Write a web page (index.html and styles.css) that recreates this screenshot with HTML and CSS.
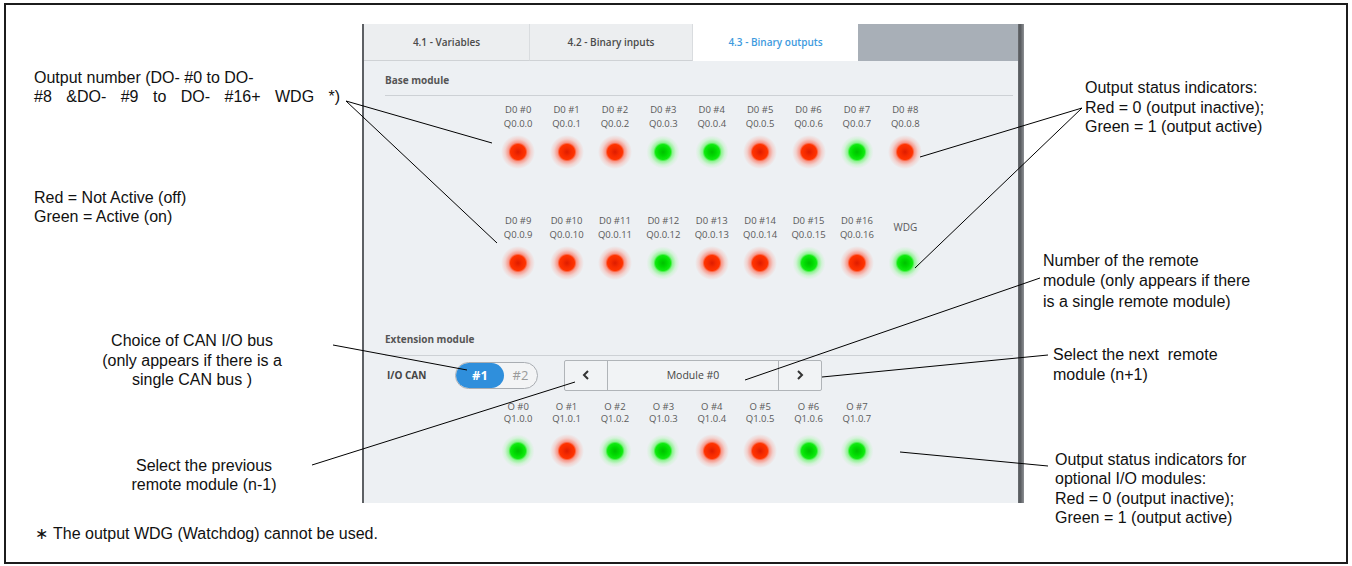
FILE: index.html
```html
<!DOCTYPE html>
<html lang="en">
<head>
	<meta charset="UTF-8">
	<title>Binary outputs</title>
	<link rel="stylesheet" href="styles.css">
</head>
<body>
	<div class="sheet">
		<div class="notes notes-left">
			<p class="note n-output">Output number (DO- #0 to DO-<br><span class="wide">#8 &amp;DO- #9 to DO- #16+ WDG *)</span></p>
			<p class="note n-legend">Red = Not Active (off)<br>Green = Active (on)</p>
			<p class="note n-can">Choice of CAN I/O bus<br>(only appears if there is a<br>single CAN bus )</p>
			<p class="note n-prev">Select the previous<br>remote module (n-1)</p>
			<p class="note n-foot"><span class="star">&lowast;</span>The output WDG (Watchdog) cannot be used.</p>
		</div>

		<div class="panel">
			<div class="tabs">
				<div class="tab t1">4.1 - Variables</div>
				<div class="tab t2">4.2 - Binary inputs</div>
				<div class="tab t3 on">4.3 - Binary outputs</div>
				<div class="tab-fill"></div>
			</div>
			<div class="pbody">
				<div class="sec-title">Base module</div>
				<div class="leds base r1">
					<div class="cell"><div class="lbl">D0 #0<br>Q0.0.0</div><div class="led red"></div></div>
					<div class="cell"><div class="lbl">D0 #1<br>Q0.0.1</div><div class="led red"></div></div>
					<div class="cell"><div class="lbl">D0 #2<br>Q0.0.2</div><div class="led red"></div></div>
					<div class="cell"><div class="lbl">D0 #3<br>Q0.0.3</div><div class="led green"></div></div>
					<div class="cell"><div class="lbl">D0 #4<br>Q0.0.4</div><div class="led green"></div></div>
					<div class="cell"><div class="lbl">D0 #5<br>Q0.0.5</div><div class="led red"></div></div>
					<div class="cell"><div class="lbl">D0 #6<br>Q0.0.6</div><div class="led red"></div></div>
					<div class="cell"><div class="lbl">D0 #7<br>Q0.0.7</div><div class="led green"></div></div>
					<div class="cell"><div class="lbl">D0 #8<br>Q0.0.8</div><div class="led red"></div></div>
				</div>
				<div class="leds base r2">
					<div class="cell"><div class="lbl">D0 #9<br>Q0.0.9</div><div class="led red"></div></div>
					<div class="cell"><div class="lbl">D0 #10<br>Q0.0.10</div><div class="led red"></div></div>
					<div class="cell"><div class="lbl">D0 #11<br>Q0.0.11</div><div class="led red"></div></div>
					<div class="cell"><div class="lbl">D0 #12<br>Q0.0.12</div><div class="led green"></div></div>
					<div class="cell"><div class="lbl">D0 #13<br>Q0.0.13</div><div class="led red"></div></div>
					<div class="cell"><div class="lbl">D0 #14<br>Q0.0.14</div><div class="led red"></div></div>
					<div class="cell"><div class="lbl">D0 #15<br>Q0.0.15</div><div class="led green"></div></div>
					<div class="cell"><div class="lbl">D0 #16<br>Q0.0.16</div><div class="led red"></div></div>
					<div class="cell"><div class="lbl wdg">WDG</div><div class="led green"></div></div>
				</div>

				<div class="sec-title ext">Extension module</div>
				<div class="ctrl">
					<div class="can-lbl">I/O CAN</div>
					<div class="pill"><span class="p-on">#1</span><span class="p-off">#2</span></div>
					<div class="nav">
						<div class="nav-btn"><svg width="8" height="10" viewBox="0 0 8 10"><polyline points="6,1 2,5 6,9" fill="none" stroke="#333" stroke-width="2"/></svg></div>
						<div class="nav-mid">Module #0</div>
						<div class="nav-btn"><svg width="8" height="10" viewBox="0 0 8 10"><polyline points="2,1 6,5 2,9" fill="none" stroke="#333" stroke-width="2"/></svg></div>
					</div>
				</div>
				<div class="leds ext-row">
					<div class="cell"><div class="lbl">O #0<br>Q1.0.0</div><div class="led green"></div></div>
					<div class="cell"><div class="lbl">O #1<br>Q1.0.1</div><div class="led red"></div></div>
					<div class="cell"><div class="lbl">O #2<br>Q1.0.2</div><div class="led green"></div></div>
					<div class="cell"><div class="lbl">O #3<br>Q1.0.3</div><div class="led green"></div></div>
					<div class="cell"><div class="lbl">O #4<br>Q1.0.4</div><div class="led red"></div></div>
					<div class="cell"><div class="lbl">O #5<br>Q1.0.5</div><div class="led red"></div></div>
					<div class="cell"><div class="lbl">O #6<br>Q1.0.6</div><div class="led green"></div></div>
					<div class="cell"><div class="lbl">O #7<br>Q1.0.7</div><div class="led green"></div></div>
				</div>
			</div>
		</div>

		<div class="notes notes-right">
			<p class="note n-status">Output status indicators:<br>Red = 0 (output inactive);<br>Green = 1 (output active)</p>
			<p class="note n-remote">Number of the remote<br>module (only appears if there<br>is a single remote module)</p>
			<p class="note n-next">Select the next&nbsp; remote<br>module (n+1)</p>
			<p class="note n-opt">Output status indicators for<br>optional I/O modules:<br>Red = 0 (output inactive);<br>Green = 1 (output active)</p>
		</div>

		<!-- leader lines, drawn in page coordinates -->
		<svg class="leaders" width="1340" height="557" viewBox="6 5 1340 557">
			<g stroke="#000" stroke-width="1" fill="none">
				<line x1="346" y1="101" x2="492" y2="143"/>
				<line x1="346" y1="101" x2="497" y2="243"/>
				<line x1="1082" y1="108" x2="920" y2="157"/>
				<line x1="1082" y1="108" x2="915" y2="268"/>
				<line x1="1040" y1="278" x2="745" y2="380"/>
				<line x1="1048" y1="355" x2="822" y2="377"/>
				<line x1="1048" y1="466" x2="900" y2="452"/>
				<line x1="333" y1="345" x2="467" y2="370"/>
				<line x1="312" y1="465" x2="575" y2="382"/>
			</g>
		</svg>
	</div>
</body>
</html>
```

FILE: styles.css
```css
html,body{
	margin: 0;
	padding: 0;
	background: #fff;
}
body{
	font-family: "Liberation Sans", Arial, sans-serif;
	color: #111;
}
.sheet{
	position: relative;
	display: flex;
	width: 1340px;
	height: 557px;
	margin: 3px 0 0 4px;
	border: 2px solid #1c1c1c;
}

/* callout texts */
.notes{display: flex;flex-direction: column;}
.notes-left{width: 356px;flex: none;}
.notes-right{flex: 1;}
.note{margin: 0;font-size: 16px;line-height: 19px;white-space: nowrap;}
.n-output{margin-top: 63px;padding-left: 28px;}
.wide{word-spacing: 10px;}
.n-legend{margin-top: 82px;padding-left: 28px;}
.n-can{margin-top: 105px;margin-left: 36px;width: 300px;text-align: center;line-height: 19.5px;}
.n-prev{margin-top: 66px;margin-left: 48px;width: 300px;text-align: center;}
.n-foot{margin-top: 30px;padding-left: 29px;}
.star{display: inline-block;width: 18px;}
.n-status{margin-top: 73px;padding-left: 61px;line-height: 19.5px;}
.n-remote{margin-top: 114px;padding-left: 19px;line-height: 20.5px;}
.n-next{margin-top: 33px;padding-left: 29px;line-height: 20px;}
.n-opt{margin-top: 65px;padding-left: 31px;line-height: 19.25px;}

/* device screenshot */
.panel{
	flex: none;
	box-sizing: border-box;
	width: 662px;
	height: 479px;
	margin-top: 19px;
	border-left: 2px solid #5d6064;
	padding-right: 6px;
	background: linear-gradient(to left, #8d9094 0, #54575b 4px, #6c6f73 6px, transparent 6px), #edf0f3;
	font-family: "Open Sans", "Noto Sans", sans-serif;
	color: #555;
	display: flex;
	flex-direction: column;
}
.tabs{display: flex;height: 37px;flex: none;}
.tab{
	box-sizing: border-box;
	display: flex;
	align-items: center;
	justify-content: center;
	font-size: 10px;
	font-weight: 600;
	color: #4a4a4a;
	background: #eceef0;
	border-bottom: 1px solid #cfd2d5;
	border-right: 1px solid #d9dcdf;
}
.t1{width: 166px;}
.t2{width: 163px;}
.t3{width: 165px;}
.tab.on{background: #fff;color: #3d9ade;border-bottom-color: #fff;border-right: none;}
.tab-fill{flex: 1;background: #a8afb7;}

.pbody{padding: 0 5px 0 21px;}
.sec-title{
	font-size: 10px;
	font-weight: 700;
	line-height: 14px;
	color: #555;
	padding: 12px 0 8px 0;
	border-bottom: 1px solid #cdd1d5;
}
.sec-title.ext{margin-top: 41px;padding-bottom: 9px;}

.leds{
	display: grid;
	grid-template-columns: repeat(9, 48.4px);
	margin-left: 109px;
}
.cell{display: flex;flex-direction: column;align-items: center;}
.lbl{
	height: 27px;
	font-size: 9.5px;
	line-height: 13.4px;
	text-align: center;
	white-space: nowrap;
	color: #5a5a5a;
	display: flex;
	align-items: center;
}
.lbl.wdg{font-size: 10px;}
.led{width: 34px;height: 34px;border-radius: 50%;margin: 5px 0 -1px;}
.led.red{background: radial-gradient(circle, #dd1c00 0, #f52a00 4px, #ff3300 7.5px, rgba(255,95,70,.6) 9.5px, rgba(255,130,110,.28) 13px, rgba(255,160,150,0) 17px);}
.led.green{background: radial-gradient(circle, #00c000 0, #00da00 4px, #10ea10 7.5px, rgba(70,245,70,.55) 9.5px, rgba(120,250,120,.22) 13px, rgba(150,255,150,0) 16.5px);}
.base.r1{margin-top: 7px;}
.base.r2{margin-top: 46px;}

.ctrl{display: flex;align-items: center;height: 30px;margin-top: 4px;}
.can-lbl{width: 68px;padding-left: 2px;font-size: 10px;font-weight: 700;color: #444;}
.pill{
	box-sizing: border-box;
	display: flex;
	width: 83px;
	height: 27px;
	border: 1px solid #a9adb2;
	border-radius: 14px;
	background: #f3f4f5;
	overflow: hidden;
}
.pill span{display: flex;align-items: center;justify-content: center;font-size: 13px;}
.p-on{width: 48px;background: #2f8fdc;color: #fff;font-weight: 700;border-radius: 14px;}
.p-off{flex: 1;color: #9a9a9a;}
.nav{
	box-sizing: border-box;
	display: flex;
	width: 258px;
	height: 31px;
	margin-left: 26px;
	border: 1px solid #b0b4b8;
	border-radius: 2px;
	background: #f1f3f5;
}
.nav-btn{width: 42px;display: flex;align-items: center;justify-content: center;}
.nav-mid{
	flex: 1;
	display: flex;
	align-items: center;
	justify-content: center;
	font-size: 10.5px;
	color: #444;
	border-left: 1px solid #b0b4b8;
	border-right: 1px solid #b0b4b8;
}
.ext-row{margin-top: 11px;}
.ext-row .lbl{height: 24px;line-height: 12px;}
.ext-row .led{margin-top: 9px;}

.leaders{position: absolute;left: 0;top: 0;pointer-events: none;}
```
